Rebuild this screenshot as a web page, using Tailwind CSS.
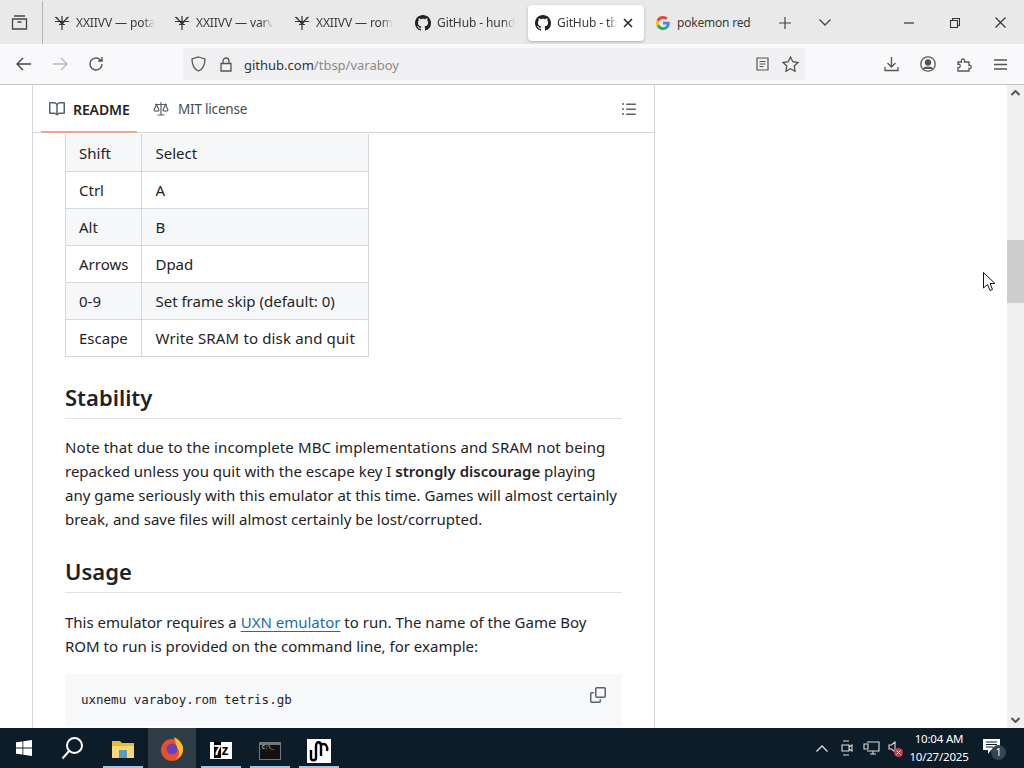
<!DOCTYPE html>
<html lang="en">
<head>
  <meta charset="UTF-8">
  <title>GitHub - tbsp/varaboy</title>
  <script src="https://cdn.jsdelivr.net/npm/@tailwindcss/browser@4"></script>
</head>
<body class="w-[1024px] h-[768px] overflow-hidden bg-white flex flex-col relative font-['Noto_Sans',sans-serif] text-[#1f2328]">

  <!-- tab strip -->
  <div class="h-[44px] pt-[1px] bg-[#e9e9e9] flex items-center shrink-0 text-[12px] tracking-[-0.1px] text-[#3a3a3a]">
    <div class="w-[43px] h-full -mt-[1px] flex items-center justify-center border-r border-[#b5b5b5]">
      <svg class="w-[17px] h-[17px] ml-[-4px]" viewBox="0 0 17 17" fill="none" stroke="#444" stroke-width="1.300"><path d="M3 2h11M1.500 5h14v10h-14zM6.500 8h4"/></svg>
    </div>
    <div class="w-[120px] pl-[11px] flex items-center gap-[6px]">
      <svg class="w-4 h-4 shrink-0" viewBox="0 0 16 16" fill="none" stroke="#333" stroke-width="1.200"><path d="M8 1v14M1.500 2l6.500 6 6.500-6M1 6.500h14M3 2.500l5 7 5-7M5 9.500h6"/></svg>
      <span class="whitespace-nowrap [mask-image:linear-gradient(to_right,black_85%,transparent)]">XXIIVV — pota</span>
    </div>
    <div class="w-[120px] pl-[11px] flex items-center gap-[6px]">
      <svg class="w-4 h-4 shrink-0" viewBox="0 0 16 16" fill="none" stroke="#333" stroke-width="1.200"><path d="M8 1v14M1.500 2l6.500 6 6.500-6M1 6.500h14M3 2.500l5 7 5-7M5 9.500h6"/></svg>
      <span class="whitespace-nowrap [mask-image:linear-gradient(to_right,black_85%,transparent)]">XXIIVV — varv</span>
    </div>
    <div class="w-[120px] pl-[11px] flex items-center gap-[6px]">
      <svg class="w-4 h-4 shrink-0" viewBox="0 0 16 16" fill="none" stroke="#333" stroke-width="1.200"><path d="M8 1v14M1.500 2l6.500 6 6.500-6M1 6.500h14M3 2.500l5 7 5-7M5 9.500h6"/></svg>
      <span class="whitespace-nowrap [mask-image:linear-gradient(to_right,black_85%,transparent)]">XXIIVV — rom</span>
    </div>
    <div class="w-[124px] pl-[12px] flex items-center gap-[6px]">
      <svg class="w-4 h-4 shrink-0" viewBox="0 0 16 16" fill="#222"><path d="M8 0C3.580 0 0 3.580 0 8c0 3.540 2.290 6.530 5.470 7.590.4.070.55-.17.55-.38 0-.19-.01-.82-.01-1.490-2.010.37-2.530-.49-2.690-.94-.09-.23-.48-.94-.82-1.130-.28-.15-.68-.52-.01-.53.63-.01 1.080.58 1.230.82.72 1.210 1.870.87 2.330.66.070-.52.28-.87.51-1.070-1.780-.2-3.640-.89-3.640-3.950 0-.87.31-1.590.82-2.150-.08-.2-.36-1.020.08-2.120 0 0 .67-.21 2.200.82.64-.18 1.320-.27 2-.27.68 0 1.360.09 2 .27 1.530-1.040 2.200-.82 2.200-.82.44 1.100.16 1.920.08 2.120.51.56.82 1.270.82 2.150 0 3.070-1.870 3.750-3.650 3.950.29.25.54.73.54 1.480 0 1.070-.01 1.930-.01 2.200 0 .21.15.46.55.38A8.013 8.013 0 0016 8c0-4.420-3.580-8-8-8z"/></svg>
      <span class="whitespace-nowrap [mask-image:linear-gradient(to_right,black_85%,transparent)]">GitHub - hund</span>
    </div>
    <div class="w-[116px] h-[36px] ml-[1px] bg-white rounded-[4px] shadow-[0_1px_3px_rgba(0,0,0,0.25)] pl-[7px] flex items-center gap-[6px]">
      <svg class="w-4 h-4 shrink-0" viewBox="0 0 16 16" fill="#222"><path d="M8 0C3.580 0 0 3.580 0 8c0 3.540 2.290 6.530 5.470 7.590.4.070.55-.17.55-.38 0-.19-.01-.82-.01-1.490-2.010.37-2.530-.49-2.690-.94-.09-.23-.48-.94-.82-1.130-.28-.15-.68-.52-.01-.53.63-.01 1.080.58 1.230.82.72 1.210 1.870.87 2.330.66.070-.52.28-.87.51-1.070-1.780-.2-3.640-.89-3.640-3.950 0-.87.31-1.590.82-2.150-.08-.2-.36-1.020.08-2.120 0 0 .67-.21 2.200.82.64-.18 1.320-.27 2-.27.68 0 1.360.09 2 .27 1.530-1.040 2.200-.82 2.200-.82.44 1.100.16 1.920.08 2.120.51.56.82 1.270.82 2.150 0 3.070-1.870 3.750-3.650 3.950.29.25.54.73.54 1.480 0 1.070-.01 1.930-.01 2.200 0 .21.15.46.55.38A8.013 8.013 0 0016 8c0-4.420-3.580-8-8-8z"/></svg>
      <span class="w-[60px] whitespace-nowrap [mask-image:linear-gradient(to_right,black_85%,transparent)]">GitHub - tb</span>
      <svg class="w-[10px] h-[10px] shrink-0" viewBox="0 0 10 10" stroke="#222" stroke-width="1.500"><path d="M1 1l8 8M9 1l-8 8"/></svg>
    </div>
    <div class="w-[135px] pl-[12px] flex items-center gap-[7px]">
      <svg class="w-[14px] h-[14px] shrink-0" viewBox="0 0 48 48"><path fill="#EA4335" d="M24 9.500c3.500 0 6.700 1.200 9.200 3.600l6.900-6.900C35.900 2.400 30.500 0 24 0 14.600 0 6.500 5.400 2.600 13.200l8 6.200C12.500 13.700 17.800 9.500 24 9.500z"/><path fill="#4285F4" d="M47 24.500c0-1.600-.1-3.100-.4-4.500H24v9h12.900c-.6 3-2.300 5.500-4.800 7.200l7.700 6C44.300 38 47 31.800 47 24.500z"/><path fill="#FBBC05" d="M10.500 28.600c-.5-1.400-.8-3-.8-4.600s.3-3.200.8-4.600l-8-6.200C.9 16.500 0 20.100 0 24s.9 7.500 2.600 10.800l7.900-6.200z"/><path fill="#34A853" d="M24 48c6.500 0 11.900-2.100 15.900-5.800l-7.700-6c-2.100 1.400-4.900 2.300-8.100 2.300-6.200 0-11.500-4.200-13.400-9.900l-8 6.200C6.500 42.600 14.600 48 24 48z"/></svg>
      <span class="whitespace-nowrap tracking-[-0.2px]">pokemon red</span>
    </div>
    <svg class="w-[12px] h-[12px] shrink-0" viewBox="0 0 12 12" stroke="#444" stroke-width="1.200"><path d="M6 0v12M0 6h12"/></svg>
    <svg class="w-[12px] h-[7px] ml-[28px] shrink-0" viewBox="0 0 12 7" fill="none" stroke="#444" stroke-width="1.300"><path d="M.5.500L6 6 11.500.500"/></svg>
    <svg class="w-[10px] h-[2px] ml-[73px] shrink-0" viewBox="0 0 10 2" stroke="#333" stroke-width="1.200"><path d="M0 1h10"/></svg>
    <svg class="w-[10px] h-[10px] ml-[36px] shrink-0" viewBox="0 0 10 10" fill="none" stroke="#333" stroke-width="1.100"><path d="M.5 2.500h7v7h-7zM2.500 2.500V.5h7v7h-2"/></svg>
    <svg class="w-[11px] h-[11px] ml-[35px] shrink-0" viewBox="0 0 11 11" stroke="#333" stroke-width="1.100"><path d="M.5.500l10 10M10.500.500l-10 10"/></svg>
  </div>

  <!-- toolbar -->
  <div class="h-[41px] bg-[#f9f9fb] border-b border-[#c4c4c4] flex items-center shrink-0">
    <svg class="w-[16px] h-[14px] ml-[16px] shrink-0" viewBox="0 0 16 14" fill="none" stroke="#444" stroke-width="1.400"><path d="M15 7H1.500M7 1L1 7l6 6"/></svg>
    <svg class="w-[16px] h-[14px] ml-[20px] shrink-0" viewBox="0 0 16 14" fill="none" stroke="#b9b9b9" stroke-width="1.400"><path d="M1 7h13.500M9 1l6 6-6 6"/></svg>
    <svg class="w-[16px] h-[16px] ml-[20px] shrink-0" viewBox="0 0 16 16" fill="none" stroke="#555" stroke-width="1.400"><path d="M14 8a6 6 0 1 1-2-4.500L14 5M14 1v4h-4"/></svg>
    <div class="w-[622px] h-[32px] ml-[79px] bg-[#f0f0f2] rounded-[4px] flex items-center text-[13px]">
      <svg class="w-[15px] h-[16px] ml-[8px] shrink-0" viewBox="0 0 15 16" fill="none" stroke="#555" stroke-width="1.300"><path d="M7.500 1L14 3c0 6-1.500 10-6.500 12C2.500 13 1 9 1 3z"/></svg>
      <svg class="w-[12px] h-[15px] ml-[14px] shrink-0" viewBox="0 0 12 15" fill="none" stroke="#555" stroke-width="1.300"><path d="M1 6.500h10V14H1zM3 6.500V4a3 3 0 0 1 6 0v2.500"/></svg>
      <span class="ml-[12px] pt-[3px] text-[#333]">github.com<span class="text-[#8a8a8a]">/tbsp/varaboy</span></span>
      <svg class="w-[13px] h-[14px] ml-auto shrink-0" viewBox="0 0 13 14" fill="none" stroke="#555" stroke-width="1.200"><path d="M1 1h11v12H1zM3.500 4.500h6M3.500 7h6M3.500 9.500h4"/></svg>
      <svg class="w-[17px] h-[16px] ml-[13px] mr-[6px] shrink-0" viewBox="0 0 17 16" fill="none" stroke="#555" stroke-width="1.300"><path d="M8.500 1l2.300 4.700 5.200.8-3.800 3.600.9 5.200-4.600-2.500-4.600 2.500.9-5.200L1 6.500l5.200-.8z"/></svg>
    </div>
    <svg class="w-[15px] h-[16px] ml-[79px] shrink-0" viewBox="0 0 15 16" fill="none" stroke="#555" stroke-width="1.300"><path d="M7.500 1v10M3.500 7l4 4 4-4M1 11v3.500h13V11"/></svg>
    <svg class="w-[16px] h-[16px] ml-[21px] shrink-0" viewBox="0 0 16 16" fill="none" stroke="#555" stroke-width="1.300"><circle cx="8" cy="8" r="7.200"/><circle cx="8" cy="6.500" r="2.500" fill="#555"/><path d="M3.500 13c1-2.500 8-2.500 9 0" fill="#555"/></svg>
    <svg class="w-[15px] h-[16px] ml-[21px] shrink-0" viewBox="0 0 15 16" fill="none" stroke="#555" stroke-width="1.300"><path d="M1 6h3.500c-1-4 4-4 3 0H12v3.500c3-1 3 4 0 3V15H1v-3.500c3 1 3-4.500 0-3z"/></svg>
    <svg class="w-[13px] h-[11px] ml-[22px] shrink-0" viewBox="0 0 13 11" stroke="#555" stroke-width="1.300"><path d="M0 1h13M0 5.500h13M0 10h13"/></svg>
  </div>

  <!-- page -->
  <div class="flex-1 min-h-0 flex">
    <div class="flex-1 min-w-0 pl-[32px]">
      <div class="w-[623px] h-full border-x border-[#d5d8da] overflow-hidden">
        <div class="h-[48px] border-b border-[#d5d8da] flex items-center relative text-[14px]">
          <div class="h-full pl-[8px] w-[96px] ml-[8px] pt-[1px] flex items-center gap-[8px] font-semibold tracking-[-0.1px] relative">
            <svg class="w-4 h-4 shrink-0" viewBox="0 0 16 16" fill="#59636e"><path d="M0 1.750A.75.75 0 0 1 .75 1h4.253c1.227 0 2.317.59 3 1.501A3.743 3.743 0 0 1 11.006 1h4.245a.75.75 0 0 1 .75.75v10.500a.75.75 0 0 1-.75.75h-4.507a2.250 2.250 0 0 0-1.591.659l-.622.621a.75.75 0 0 1-1.060 0l-.622-.621A2.250 2.250 0 0 0 5.258 13H.75a.75.75 0 0 1-.75-.75Zm7.251 10.324.004-5.073-.002-2.253A2.250 2.250 0 0 0 5.003 2.500H1.500v9h3.757a3.750 3.750 0 0 1 1.994.574ZM8.755 4.750l-.004 7.322a3.752 3.752 0 0 1 1.992-.572H14.500v-9h-3.495a2.250 2.250 0 0 0-2.250 2.250Z"/></svg>
            <span>README</span>
            <div class="absolute left-0 right-0 bottom-[-1px] h-[2px] bg-[#f0a58c]"></div>
          </div>
          <div class="ml-[16px] pt-[1px] flex items-center gap-[9px]">
            <svg class="w-4 h-4 shrink-0" viewBox="0 0 16 16" fill="none" stroke="#59636e" stroke-width="1.200"><path d="M8 1v13M4.500 14h7M2 3.500h12M3.500 3.500L1 9c.8 1.600 4.200 1.600 5 0L3.500 3.500zM12.500 3.500L10 9c.8 1.600 4.200 1.600 5 0l-2.500-5.500z"/></svg>
            <span class="text-[#444c56] pt-[1px] text-[13.500px] tracking-[-0.2px]">MIT license</span>
          </div>
          <svg class="w-4 h-4 ml-auto mr-[17px] shrink-0" viewBox="0 0 16 16" fill="#59636e"><path d="M5.750 2.500h8.500a.75.75 0 0 1 0 1.500h-8.500a.75.75 0 0 1 0-1.500Zm0 5h8.500a.75.75 0 0 1 0 1.500h-8.500a.75.75 0 0 1 0-1.500Zm0 5h8.500a.75.75 0 0 1 0 1.500h-8.500a.75.75 0 0 1 0-1.500ZM2 14a1 1 0 1 1 0-2 1 1 0 0 1 0 2Zm1-6a1 1 0 1 1-2 0 1 1 0 0 1 2 0ZM2 4a1 1 0 1 1 0-2 1 1 0 0 1 0 2Z"/></svg>
        </div>
        <div class="pl-[32px] pr-[32px] text-[15px]">
          <table class="border-collapse mt-[1px]">
            <tbody>
              <tr class="h-[37px] bg-[#f6f7f8]"><td class="border border-[#d5d8da] border-t-0 w-[76px] px-[13px] pt-[1px]">Shift</td><td class="border border-[#d5d8da] border-t-0 w-[227px] px-[13px] pt-[1px]">Select</td></tr>
              <tr class="h-[37px]"><td class="border border-[#d5d8da] px-[13px] pt-[1px]">Ctrl</td><td class="border border-[#d5d8da] px-[13px] pt-[1px]">A</td></tr>
              <tr class="h-[37px] bg-[#f6f7f8]"><td class="border border-[#d5d8da] px-[13px] pt-[1px]">Alt</td><td class="border border-[#d5d8da] px-[13px] pt-[1px]">B</td></tr>
              <tr class="h-[37px]"><td class="border border-[#d5d8da] px-[13px] pt-[1px]">Arrows</td><td class="border border-[#d5d8da] px-[13px] pt-[1px]">Dpad</td></tr>
              <tr class="h-[37px] bg-[#f6f7f8]"><td class="border border-[#d5d8da] px-[13px] pt-[1px]">0-9</td><td class="border border-[#d5d8da] px-[13px] pt-[1px]">Set frame skip (default: 0)</td></tr>
              <tr class="h-[37px]"><td class="border border-[#d5d8da] px-[13px] pt-[1px]">Escape</td><td class="border border-[#d5d8da] px-[13px] pt-[1px] whitespace-nowrap tracking-[0.15px]">Write SRAM to disk and quit</td></tr>
            </tbody>
          </table>
          <h2 class="mt-[24px] h-[38px] text-[22px] leading-[32px] font-semibold border-b border-[#dfe1e3]">Stability</h2>
          <p class="mt-[16px] leading-[24px] whitespace-nowrap"><span class="tracking-[0.1px]">Note that due to the incomplete MBC implementations and SRAM not being</span><br>repacked unless you quit with the escape key I <strong class="font-semibold">strongly discourage</strong> playing<br>any game seriously with this emulator at this time. Games will almost certainly<br>break, and save files will almost certainly be lost/corrupted.</p>
          <h2 class="mt-[24px] h-[38px] text-[22px] leading-[32px] font-semibold border-b border-[#dfe1e3]">Usage</h2>
          <p class="mt-[17px] leading-[24px] whitespace-nowrap">This emulator requires a <a class="text-[#1a6bb8] underline underline-offset-[3px]">UXN emulator</a> to run. The name of the Game Boy<br>ROM to run is provided on the command line, for example:</p>
          <div class="mt-[16px] h-[52px] bg-[#f7f8f9] pl-[16px] pr-[16px] flex items-start">
            <code class="mt-[17px] text-[12.500px] leading-[18px] font-['DejaVu_Sans_Mono',monospace]">uxnemu varaboy.rom tetris.gb</code>
            <svg class="w-4 h-4 ml-auto mt-[13px] shrink-0" viewBox="0 0 16 16" fill="#59636e"><path d="M0 6.750C0 5.784.784 5 1.750 5h1.500a.75.75 0 0 1 0 1.500h-1.500a.25.25 0 0 0-.25.25v7.500c0 .138.112.25.25.25h7.500a.25.25 0 0 0 .25-.25v-1.500a.75.75 0 0 1 1.500 0v1.500A1.750 1.750 0 0 1 9.250 16h-7.500A1.750 1.750 0 0 1 0 14.250Z"/><path d="M5 1.750C5 .784 5.784 0 6.750 0h7.500C15.216 0 16 .784 16 1.750v7.500A1.750 1.750 0 0 1 14.250 11h-7.500A1.750 1.750 0 0 1 5 9.250Zm1.750-.25a.25.25 0 0 0-.25.25v7.500c0 .138.112.25.25.25h7.500a.25.25 0 0 0 .25-.25v-7.500a.25.25 0 0 0-.25-.25Z"/></svg>
          </div>
        </div>
      </div>
    </div>
    <!-- scrollbar -->
    <div class="w-[17px] bg-[#f0f0f0] shrink-0 flex flex-col items-center">
      <svg class="w-[9px] h-[6px] mt-[5px] shrink-0" viewBox="0 0 9 6" fill="none" stroke="#555" stroke-width="2"><path d="M.5 5L4.500 1l4 4"/></svg>
      <div class="w-full h-[63px] mt-[144px] bg-[#cdcdcd] shrink-0"></div>
      <svg class="w-[9px] h-[6px] mt-auto mb-[5px] shrink-0" viewBox="0 0 9 6" fill="none" stroke="#555" stroke-width="2"><path d="M.5 1l4 4 4-4"/></svg>
    </div>
  </div>

  <!-- taskbar -->
  <div class="h-[40px] bg-[#0c1c28] flex items-center shrink-0 text-white">
    <div class="w-[48px] flex justify-center">
      <svg class="w-[16px] h-[16px]" viewBox="0 0 16 16" fill="#fff"><path d="M0 2.300l6.500-.9v6.200H0zM7.300 1.300L16 0v7.600H7.300zM0 8.400h6.500v6.200L0 13.700zM7.300 8.400H16V16l-8.700-1.300z"/></svg>
    </div>
    <div class="w-[48px] flex justify-center">
      <svg class="w-[23px] h-[24px]" viewBox="0 0 23 24" fill="none" stroke="#fff" stroke-width="2"><circle cx="13.500" cy="9.500" r="7.500"/><path d="M8 15l-6.500 7.500"/></svg>
    </div>
    <div class="w-[48px] h-full flex flex-col items-center justify-end ml-[3px]">
      <svg class="w-[22px] h-[20px] mb-[6px]" viewBox="0 0 22 20"><path fill="#e8b83f" d="M0 1h8l2 2h12v15H0z"/><path fill="#f6d874" d="M0 6h22v12H0z"/><path fill="#5d9bc4" d="M7 10h8v8H7z"/></svg>
      <div class="w-[40px] h-[2px] bg-[#9cc6e6]"></div>
    </div>
    <div class="w-[48px] h-full bg-[#2f3d47] flex items-center justify-center ml-[1px]">
      <svg class="w-[24px] h-[25px]" viewBox="0 0 24 25"><circle cx="12" cy="14" r="11" fill="#e8502c"/><path fill="#ffbd2e" d="M14 1c6 3 10 8 9 14-1 4-4 7-7 8 4-3 4-8 1-11-1-4-2-7-3-11z"/><circle cx="12" cy="13" r="5.500" fill="#6c3fc0"/></svg>
    </div>
    <div class="w-[48px] h-full flex flex-col items-center justify-end ml-[1px]">
      <div class="w-[22px] h-[17px] mb-[7px] bg-white text-black text-[14px] leading-[17px] font-bold text-center font-['Liberation_Sans',sans-serif]"><span class="bg-black text-white">7</span>z</div>
      <div class="w-[40px] h-[2px] bg-[#9cc6e6]"></div>
    </div>
    <div class="w-[48px] h-full flex flex-col items-center justify-end ml-[1px]">
      <div class="w-[22px] h-[18px] mb-[6px] bg-[#111] border border-[#777] border-t-[3px] text-[5px] leading-[7px] text-white pl-[2px] font-['Liberation_Mono',monospace]">C:\_</div>
      <div class="w-[40px] h-[2px] bg-[#9cc6e6]"></div>
    </div>
    <div class="w-[48px] h-full flex flex-col items-center justify-end ml-[1px]">
      <div class="w-[24px] h-[24px] mb-[3px] bg-white flex items-center justify-center">
        <svg class="w-[22px] h-[22px]" viewBox="0 0 22 22" fill="none" stroke="#000" stroke-width="2.400"><path d="M3 10v8c0 3 5 3 5 0V6c0-5 5-5 5 0v10M13 5c5-3 7 2 6 6"/></svg>
      </div>
      <div class="w-[40px] h-[2px] bg-[#9cc6e6]"></div>
    </div>
    <svg class="w-[12px] h-[7px] ml-auto shrink-0" viewBox="0 0 12 7" fill="none" stroke="#ddd" stroke-width="1.300"><path d="M.5 6.500L6 1l5.500 5.500"/></svg>
    <svg class="w-[12px] h-[16px] ml-[13px] shrink-0" viewBox="0 0 12 16" fill="none" stroke="#ddd" stroke-width="1.100"><path d="M2 1h6M2 15h6M1 5h7v6H1zM8 7l3-2v6l-3-2"/></svg>
    <svg class="w-[17px] h-[14px] ml-[10px] shrink-0" viewBox="0 0 17 14" fill="none" stroke="#ddd" stroke-width="1.100"><path d="M4 1h12v9H4M10 10v3M7 13h6M1 3h4v5H1z"/></svg>
    <div class="relative w-[15px] h-[14px] ml-[8px] shrink-0">
      <svg class="w-[9px] h-[12px]" viewBox="0 0 9 12" fill="none" stroke="#ddd" stroke-width="1.100"><path d="M1 4h2.500L7 1v10L3.500 8H1z"/></svg>
      <svg class="absolute right-0 bottom-[-2px] w-[9px] h-[9px]" viewBox="0 0 9 9"><circle cx="4.500" cy="4.500" r="4.500" fill="#d8334a"/><path d="M2.500 2.500l4 4M6.500 2.500l-4 4" stroke="#fff"/></svg>
    </div>
    <div class="w-[68px] ml-[2px] text-[11.500px] leading-[18px] text-center shrink-0 tracking-[-0.2px]">10:04 AM<br>10/27/2025</div>
    <div class="relative w-[20px] h-[18px] ml-[10px] mr-[21px] shrink-0">
      <svg class="w-[17px] h-[15px]" viewBox="0 0 17 15" fill="#fff"><path d="M0 0h17v11H8l-3 4v-4H0z"/><path d="M3 3h11M3 5.500h11M3 8h7" stroke="#0c1c28"/></svg>
      <div class="absolute right-[-3px] bottom-[-3px] w-[15px] h-[15px] rounded-full bg-[#39444d] text-[10px] leading-[15px] text-center">1</div>
    </div>
  </div>

  <!-- mouse pointer -->
  <svg class="absolute left-[983px] top-[272px] w-[13px] h-[20px]" viewBox="0 0 13 20" fill="#fff" stroke="#111" stroke-width="1"><path d="M.5.500v15.500l4-3.500 2.500 6 2.500-1-2.500-6h5z"/></svg>
</body>
</html>
